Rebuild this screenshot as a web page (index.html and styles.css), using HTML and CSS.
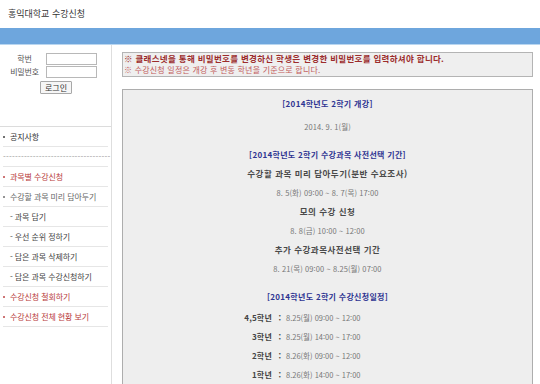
FILE: index.html
```html
<!DOCTYPE html>
<html lang="ko">
<head>
<meta charset="utf-8">
<title>홍익대학교 수강신청</title>
<link rel="stylesheet" href="styles.css">
</head>
<body>
<header class="top"><span class="title">홍익대학교 수강신청</span></header>
<div class="bar"></div>
<div class="wrap">
  <aside class="side">
    <form class="login">
      <label class="lbl">학번</label><input class="inp" type="text">
      <label class="lbl">비밀번호</label><input class="inp" type="password">
      <button class="btn" type="button">로그인</button>
    </form>
    <ul class="menu">
      <li class="item dark"><span class="dot"></span>공지사항</li>
      <li class="item dash">------------------------------------</li>
      <li class="item red"><span class="dot"></span>과목별 수강신청</li>
      <li class="item gray"><span class="dot"></span>수강할 과목 미리 담아두기</li>
      <li class="item sub">- 과목 담기</li>
      <li class="item sub">- 우선 순위 정하기</li>
      <li class="item sub">- 담은 과목 삭제하기</li>
      <li class="item sub">- 담은 과목 수강신청하기</li>
      <li class="item red"><span class="dot"></span>수강신청 철회하기</li>
      <li class="item red"><span class="dot"></span>수강신청 전체 현황 보기</li>
    </ul>
  </aside>
  <main class="content">
    <div class="notice">
      <p class="n1">※ 클래스넷을 통해 비밀번호를 변경하신 학생은 변경한 비밀번호를 입력하셔야 합니다.</p>
      <p class="n2">※ 수강신청 일정은 개강 후 변동 학년을 기준으로 합니다.</p>
    </div>
    <div class="sched">
      <p class="head first">[2014학년도 2학기 개강]</p>
      <p class="date gap">2014. 9. 1(월)</p>
      <p class="head">[2014학년도 2학기 수강과목 사전선택 기간]</p>
      <p class="label">수강할 과목 미리 담아두기(분반 수요조사)</p>
      <p class="date">8. 5(화) 09:00 ~ 8. 7(목) 17:00</p>
      <p class="label">모의 수강 신청</p>
      <p class="date">8. 8(금) 10:00 ~ 12:00</p>
      <p class="label">추가 수강과목사전선택 기간</p>
      <p class="date gap">8. 21(목) 09:00 ~ 8.25(월) 07:00</p>
      <p class="head small-gap">[2014학년도 2학기 수강신청일정]</p>
      <div class="rows">
        <span class="yr">4,5학년</span><span class="col">:</span><span class="when">8.25(월) 09:00 ~ 12:00</span>
        <span class="yr">3학년</span><span class="col">:</span><span class="when">8.25(월) 14:00 ~ 17:00</span>
        <span class="yr">2학년</span><span class="col">:</span><span class="when">8.26(화) 09:00 ~ 12:00</span>
        <span class="yr">1학년</span><span class="col">:</span><span class="when">8.26(화) 14:00 ~ 17:00</span>
      </div>
    </div>
  </main>
</div>
</body>
</html>
```
FILE: styles.css
```css
* { box-sizing: border-box; }

html, body {
  margin: 0;
  padding: 0;
  background: #fff;
  font-family: "Noto Sans CJK KR", "Noto Sans", sans-serif;
  color: #333;
  overflow: hidden;
}

p { margin: 0; }

.top {
  height: 28px;
  padding-left: 8px;
  display: flex;
  align-items: center;
}

.title {
  font-size: 9px;
  color: #333;
  line-height: 12px;
}

.bar {
  height: 17px;
  background: #6ea6dd;
  border-bottom: 1px solid #b9d6f0;
}

.wrap {
  display: flex;
  height: 339px;
}

.side {
  width: 112px;
  flex: none;
  border-right: 1px solid #dedede;
}

.login {
  height: 81px;
  padding: 8px 0 0 10px;
  display: grid;
  grid-template-columns: 29px 51px;
  grid-auto-rows: 12px;
  column-gap: 7px;
  row-gap: 1px;
  align-content: start;
}

.lbl {
  font-size: 8px;
  color: #555;
  text-align: center;
  line-height: 12px;
  white-space: nowrap;
  letter-spacing: -0.2px;
}

.inp {
  width: 51px;
  height: 12px;
  margin: 0;
  padding: 0;
  border: 1px solid #b8b8b8;
  background: #fff;
}

.btn {
  grid-column: 1 / span 2;
  justify-self: center;
  margin: 2px 0 0 5px;
  width: 32px;
  height: 13px;
  padding: 0;
  font-family: inherit;
  font-size: 8px;
  line-height: 11px;
  color: #333;
  background: #f6f6f6;
  border: 1px solid #a8a8a8;
  border-radius: 1px;
}

.menu {
  list-style: none;
  margin: 0;
  padding: 0;
  border-top: 1px solid #dcdcdc;
}

.item {
  margin: 0 3px;
  height: 20px;
  border-bottom: 1px solid #e6e6e6;
  display: flex;
  align-items: center;
  font-size: 8px;
  letter-spacing: -0.1px;
  white-space: nowrap;
}

.dot {
  width: 2px;
  height: 2px;
  background: currentColor;
  opacity: 0.7;
  margin-right: 5px;
  flex: none;
}

.dark { color: #333; }
.red { color: #b83a3a; }
.gray { color: #666; }
.sub { color: #444; padding-left: 7px; }
.dash { color: #999; letter-spacing: 0.2px; }

.content {
  flex: 1;
  padding: 7px 7px 0 10px;
  min-width: 0;
}

.notice {
  height: 25px;
  border: 1px solid #b4b4b4;
  background: #efefef;
  padding: 0 0 0 1px;
  font-size: 8px;
  line-height: 11px;
  white-space: nowrap;
}

.n1 {
  color: #9c2c2c;
  font-weight: bold;
  font-size: 8.5px;
  letter-spacing: 0.3px;
}

.n2 {
  color: #c25a5a;
  letter-spacing: 0.2px;
}

.sched {
  margin-top: 12px;
  height: 400px;
  border: 1px solid #adadad;
  background: #eeeeee;
  text-align: center;
  line-height: 19px;
  white-space: nowrap;
}

.head {
  font-size: 8px;
  font-weight: bold;
  color: #2e3592;
  letter-spacing: 0.3px;
}

.head.first { margin-top: 4px; margin-bottom: 4px; }
.gap { margin-bottom: 9px; }
.small-gap { margin-bottom: 2px; }

.date {
  font-size: 7.5px;
  color: #777;
  letter-spacing: 0.1px;
}

.label {
  font-size: 8.5px;
  font-weight: bold;
  color: #4a4a4a;
  letter-spacing: 0.5px;
}

.rows {
  display: grid;
  grid-template-columns: 149px 9px auto;
  column-gap: 0;
  text-align: left;
}

.yr {
  text-align: right;
  font-size: 8px;
  font-weight: bold;
  color: #444;
  letter-spacing: 0.2px;
}

.col {
  text-align: right;
  font-size: 8px;
  font-weight: bold;
  color: #444;
}

.when {
  padding-left: 5px;
  font-size: 7.5px;
  color: #777;
}
```
